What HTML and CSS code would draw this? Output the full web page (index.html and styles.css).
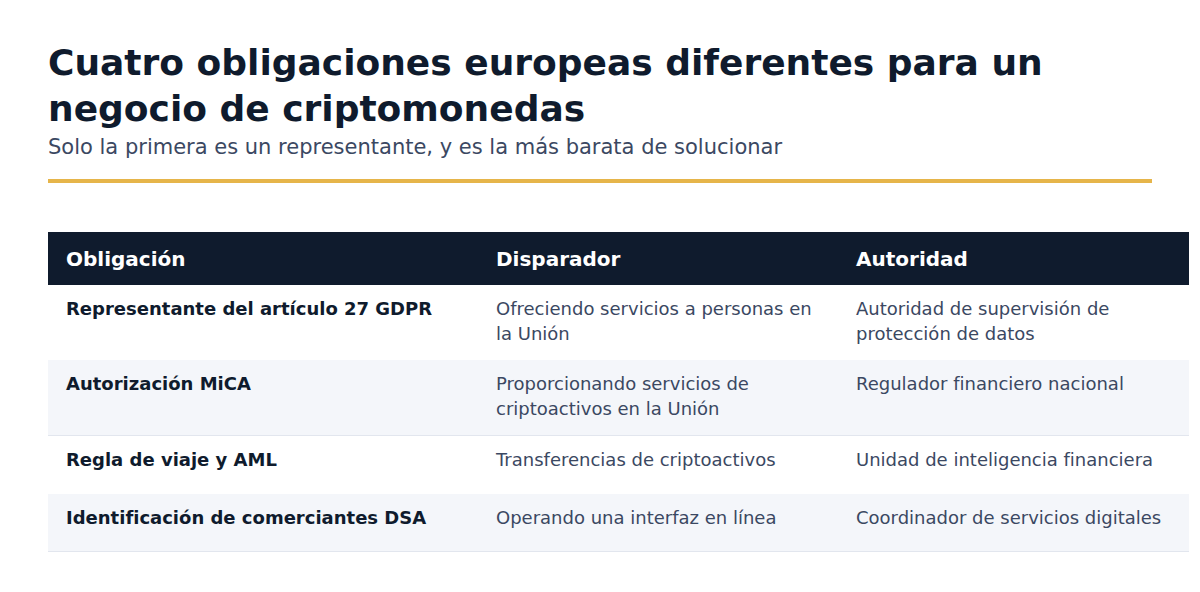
FILE: index.html
```html
<!DOCTYPE html>
<html lang="es">
<head>
<meta charset="utf-8">
<link rel="stylesheet" href="styles.css">
</head>
<body>
<main class="slide">
  <header class="intro">
    <h1 class="title">Cuatro obligaciones europeas diferentes para un negocio de criptomonedas</h1>
    <p class="subtitle">Solo la primera es un representante, y es la más barata de solucionar</p>
    <div class="rule"></div>
  </header>
  <table class="grid">
    <colgroup>
      <col class="c1"><col class="c2"><col class="c3">
    </colgroup>
    <thead>
      <tr><th>Obligación</th><th>Disparador</th><th>Autoridad</th></tr>
    </thead>
    <tbody>
      <tr><td class="name">Representante del artículo 27 GDPR</td><td>Ofreciendo servicios a personas en la Unión</td><td>Autoridad de supervisión de protección de datos</td></tr>
      <tr><td class="name">Autorización MiCA</td><td>Proporcionando servicios de criptoactivos en la Unión</td><td>Regulador financiero nacional</td></tr>
      <tr><td class="name">Regla de viaje y AML</td><td>Transferencias de criptoactivos</td><td>Unidad de inteligencia financiera</td></tr>
      <tr><td class="name">Identificación de comerciantes DSA</td><td>Operando una interfaz en línea</td><td>Coordinador de servicios digitales</td></tr>
    </tbody>
  </table>
</main>
</body>
</html>
```

FILE: styles.css
```css
html, body {
  margin: 0;
  padding: 0;
  background: #ffffff;
}
body {
  font-family: "DejaVu Sans", Verdana, sans-serif;
  color: #0f1b2d;
}
.slide {
  width: 1104px;
  padding: 40px 48px 0 48px;
}
.title {
  margin: 0;
  font-size: 36px;
  line-height: 46px;
  font-weight: bold;
  color: #0f1b2d;
}
.subtitle {
  margin: 1px 0 0 0;
  font-size: 21px;
  line-height: 28px;
  color: #3b4862;
}
.rule {
  margin-top: 18px;
  height: 4px;
  background: #e6b54a;
}
.grid {
  margin-top: 49px;
  width: 1141px;
  border-collapse: collapse;
  table-layout: fixed;
}
.c1 { width: 430px; }
.c2 { width: 360px; }
.c3 { width: 351px; }
.grid th {
  background: #0f1b2d;
  color: #ffffff;
  text-align: left;
  font-size: 20px;
  font-weight: bold;
  padding: 15px 18px 13px 18px;
  line-height: 25px;
}
.grid tbody tr {
  height: 58px;
}
.grid td {
  vertical-align: top;
  font-size: 18px;
  line-height: 25px;
  padding: 11px 18px 14px 18px;
  color: #3b4862;
}
.grid tbody tr:nth-child(even) td {
  background: #f4f6fa;
  border-bottom: 1px solid #e2e6ee;
}
.grid td.name {
  font-weight: bold;
  color: #0f1b2d;
}
```
